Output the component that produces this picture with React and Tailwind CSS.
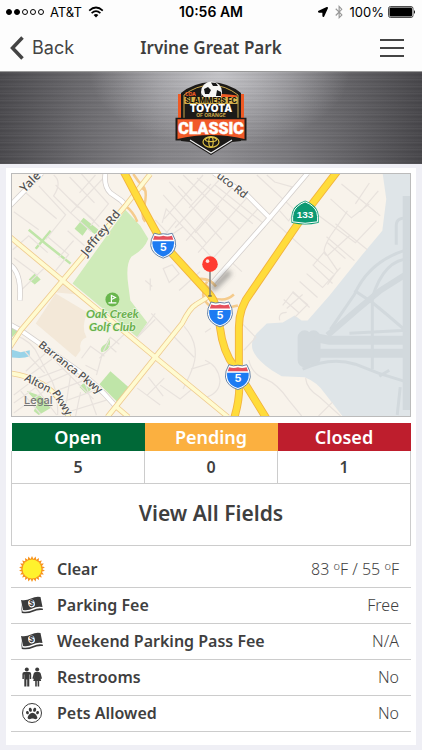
import React from "react";
import { FaBluetoothB, FaLocationArrow, FaPaw } from "react-icons/fa";

const iosFont = "font-[Inter,'Liberation_Sans',sans-serif]";

const dots = [true, true, false, false, false];

const statuses = [
  { label: "Open", count: 5, color: "bg-[#006837]" },
  { label: "Pending", count: 0, color: "bg-[#fbb040]" },
  { label: "Closed", count: 1, color: "bg-[#be1e2d]" },
];

function Battery() {
  return (
    <svg className="h-3 w-7" viewBox="0 0 28 12" aria-label="Battery full">
      <rect x="0.5" y="0.5" width="24.5" height="11" rx="2" fill="none" stroke="#222" strokeWidth="0.8" />
      <rect x="1.5" y="1.5" width="22.5" height="9" rx="1" fill="#000" />
      <path d="M26 4 Q28 6 26 8Z" fill="#000" />
    </svg>
  );
}

function Wifi() {
  return (
    <svg className="h-3 w-4" viewBox="0 0 16 12" fill="none" stroke="#000" strokeWidth="1.7" aria-hidden="true">
      <path d="M1.2 4.6 Q8 -1.6 14.8 4.6" />
      <path d="M3.6 7.2 Q8 3.2 12.4 7.2" />
      <path d="M5.6 9 Q8 7 10.4 9 L8 11.6Z" fill="#000" stroke="none" />
    </svg>
  );
}

function Crest() {
  return (
    <svg className="h-[78px] w-[78px]" viewBox="172 80 78 78" role="img" aria-label="Slammers FC Toyota of Orange Classic">
      <path d="M178 95 H244 V122 H178Z" fill="#ef5a24" />
      <path d="M211 83 Q229 84 241 94 V142 L232 143 L211 156 L190 143 L181 142 V94 Q193 84 211 83Z" fill="#1c1a18" />
      <path d="M184 120 V96 Q196 86.500 211 86 Q226 86.500 238 96 V120" fill="none" stroke="#c9a64a" strokeWidth="1" />
      <path d="M184.500 98 H237.500 V104.800 H184.500Z" fill="#d9b44e" />
      <path d="M202 97 Q212 93 237 96.500 V98 H202Z" fill="#ef5a24" />
      <circle cx="211.500" cy="93" r="10.500" fill="#f6f6f4" />
      <path d="M184.500 98.300 H237.500 V104.800 H184.500Z" fill="#d9b44e" />
      <path d="M204 90 L208 88 L211 91 L209 95 L205 95Z M211 83.500 L216 84 L218 87 L213 87Z M217 91 L221 93 L221 97 L216 97Z M201.500 95 L204 98 H202Z" fill="#161616" />
      <text x="185" y="97" fontSize="5" fontWeight="800" fill="#ef5a24" fontFamily="Inter, sans-serif">CDA</text>
      <text x="211" y="104.200" fontSize="7" fontWeight="800" fill="#17130d" textAnchor="middle" fontFamily="Inter, sans-serif">SLAMMERS FC</text>
      <text x="211" y="113.300" fontSize="10" fontWeight="900" fill="#fff" textAnchor="middle" fontFamily="Inter, sans-serif">TOYOTA</text>
      <text x="211" y="118" fontSize="5" fontWeight="700" fill="#c9a64a" textAnchor="middle" fontFamily="Inter, sans-serif">OF ORANGE</text>
      <path d="M175.500 118.800 H246.500 V141.500 H241 Q211 133 181 141.500 H175.500Z" fill="#1c1a18" />
      <path d="M177.500 120.200 H244.500 V140 Q211 132 177.500 140Z" fill="#f15a29" />
      <text x="211" y="135" fontSize="16" fontWeight="900" fill="#fff" stroke="#fff" strokeWidth="0.400" textAnchor="middle" fontFamily="Roboto, sans-serif">CLASSIC</text>
      <path d="M190 141 L211 154 L232 141" fill="none" stroke="#eee" strokeWidth="1.200" />
      <g fill="none" stroke="#dfc244" strokeWidth="1.200">
        <ellipse cx="211" cy="143" rx="8" ry="5.300" />
        <ellipse cx="211" cy="140.500" rx="5.500" ry="2.200" />
        <ellipse cx="211" cy="143" rx="2.200" ry="5" />
      </g>
    </svg>
  );
}

function Shield({ x, y }) {
  return (
    <g transform={`translate(${x} ${y})`}>
      <path d="M-9 -12.500 Q-4.500 -10.500 0 -12 Q4.500 -10.500 9 -12.500 Q13 -6 12.500 0 Q11 9 0 12.500 Q-11 9 -12.500 0 Q-13 -6 -9 -12.500Z" fill="#fff" stroke="#57779f" strokeWidth="0.900" />
      <path d="M-8.800 -10 Q-4 -8.500 0 -10 Q4 -8.500 8.800 -10 L10.200 -6 H-10.200Z" fill="#e5505c" />
      <path d="M-10.800 -4.500 H10.800 Q12 7 0 11 Q-12 7 -10.800 -4.500Z" fill="#1d7bf2" />
      <text y="5" textAnchor="middle" fontSize="11" fontWeight="700" fill="#fff" fontFamily="Inter, sans-serif">5</text>
    </g>
  );
}

const arterials = [
  "M150 173 L125 205 L62 280 L20 330 L9 347",
  "M9 236 L62 280 L155 357 L228 417",
  "M107 417 L155 357 L182 323 Q190 307 196 304 L212 294",
  "M9 373 Q24 375 36 381 Q58 391 68 417",
  "M115 406 L128 417",
];
const interstates = [
  "M123 170 L140 202 Q155 230 162 242 L206 290 Q218 300 220 327 Q223 352 235 367 L267 419",
  "M338 170 L305 213 L251 292 Q239 307 239 327 V377 Q241 397 234 419",
];
const whiteRoads = [
  "M9 205 L41 172",
  "M105 172 Q103 185 110 192 L120 199 Q124 202 125 206",
  "M308 172 L270 217 L212 283",
  "M214 172 L248 195 L270 217",
  "M9 324 L20 330 L67 363 Q93 380 115 406",
  "M9 264 Q21 272 19 300",
];
const ramps = [
  "M125 205 Q133 211 137 221 M133 173 Q138 181 144 187 Q147 192 144 205 Q140 215 145 221 M133 190 Q141 184 145 190",
  "M191 275 Q205 283 210 289 M195 279 Q209 276 216 286 M211 296 Q224 303 234 294 M212 304 Q225 309 238 305",
  "M207 281 Q196 300 216 309",
];
const lanes = [
  "M53 174 Q62 181 53 195 L70 212 L103 177 M70 212 L91 231 M78 206 L99 226 M68 197 L94 220 M38 185 L65 214 L45 239 M24 191 L56 218 M13 211 L38 229 M55 184 L78 207 M69 176 L94 202 M81 173 L108 203 L90 225 M95 174 L79 192",
  "M12 249 L28 235 L47 252 M47 236 L68 254 L55 270 M67 230 L84 245 M73 240 L58 257 M32 257 L43 266 M13 257 L37 275 M20 290 L43 268",
  "M162 222 L166 208 L213 258 M163 194 L206 242 M169 181 L222 239 M183 174 L239 228 M197 177 L253 223 M215 184 L263 222 M164 218 L203 174 M175 227 L220 178 M186 240 L233 186 M198 252 L247 197 M209 262 L258 208 M155 219 L170 235 L183 226 M164 235 L176 220",
  "M163 268 L172 264 L179 273 L169 282Z M145 280 L152 286 M150 278 V290 M189 207 L211 183 M195 232 L219 205 M178 185 L192 200",
  "M257 174 L295 209 M267 174 L275 181 L296 187 M270 217 L310 253 L334 273 M280 210 L289 220 L298 207 M292 186 L280 205 M265 226 L252 238",
  "M331 198 L352 217 L370 203 M318 214 L356 242 L377 220 M342 183 L381 215 M348 210 L340 222 L331 235 Q320 253 328 255 L350 235 M336 223 L368 249 M327 236 L355 260 M314 264 L325 251 L338 270 L328 284 M307 273 L323 287 L341 267 M313 264 L333 283 M300 281 L318 297 M293 291 L310 307 M328 242 L346 258 M370 182 L356 203 M379 190 L361 211",
  "M283 305 L293 292 L308 304 L295 317 M287 308 L303 294 M284 299 L299 312 M280 320 Q278 312 287 312 M240 321 L256 337 L244 350",
  "M249 360 Q252 374 266 379 Q278 384 289 400 L302 416 M306 378 Q307 389 320 397 L341 416 M333 402 L319 416",
  "M151 313 L194 357 M155 313 L137 337 M99 358 L130 328 M184 326 Q203 347 190 374 L183 389 M191 369 L210 363 M148 377 L163 396 M137 388 L160 405 M160 385 L180 399 L192 389 M147 395 L164 378 M205 332 L211 328 M205 360 Q218 365 220 380 Q220 392 207 397",
  "M81 358 L90 346 L104 356 M96 375 L102 353 M85 365 L97 371 M103 351 L110 337 L119 344 M108 345 L116 352",
  "M13 395 L30 382 M13 403 L37 386 M13 413 L45 390 M25 371 L48 350 M30 374 L58 354 M37 378 L66 367 M46 383 L78 369 M52 392 L87 379 M56 404 L98 389 M64 413 L106 400 M24 351 L44 373 M42 350 L77 377 M56 362 L93 399 M20 391 L40 414 M31 382 L56 415 M70 375 L64 414 M82 376 L96 415 M80 392 L75 416 M15 335 Q32 341 38 356 L47 373 Q58 389 57 415",
  "M179 290 L200 271 M137 337 L155 319 M230 260 L242 271",
];

const routeSign = "M305.500 201 Q310 202.500 313 205.500 Q319 210 318 221 Q305.500 224 293 221 Q292 210 298 205.500 Q301 202.500 305.500 201Z";

function FieldMap() {
  return (
    <svg className="block h-[242px] w-full" viewBox="11 173 400 243" preserveAspectRatio="xMidYMid slice" role="img" aria-label="Map of Irvine Great Park">
      <defs>
        <filter id="soft" x="-50%" y="-50%" width="200%" height="200%"><feGaussianBlur stdDeviation="2.500" /></filter>
      </defs>
      <rect x="-400" y="0" width="1400" height="800" fill="#f8f3eb" />
      <path d="M55 293 L87 312 Q80 327 86 337 Q78 340 80 350 L75 357 L35 323Z" fill="#f3e8d8" />
      <path d="M62 283 L77 294 L56 292Z" fill="#f3e8d8" />
      <path d="M125 209 L140 225 L148 238 Q144 249 131 256 Q125 264 128 285 L130 300 L147 322 L137 337 L72 283Z" fill="#cfebb9" />
      <g fill="#bfe5a8">
        <path d="M83 217 L98 229 L95 234 L87 228 L82 235 L74 228Z" />
        <path d="M110 371 L128 387 L117 402 L99 384Z" />
        <path d="M34 273 L40 279 L34 284 L28 279Z M84 382 L91 389 L86 394 L79 387Z M26 391 L40 396 L50 408 L38 415 L33 411 L37 403Z M11 326 L17 331 L11 337Z" />
        <path d="M109 337 Q112 350 101 352 Q98 348 106 343Z" />
      </g>
      <path d="M28 229 L45 243 L70 263 M50 230 L35 248" fill="none" stroke="#bfe5a8" strokeWidth="2.500" />
      <path d="M9 349 L20 352 L29 350 L29 356 Q22 359 9 357Z" fill="#98d3e8" />
      <path d="M383 170 L387 198 L383 230 L362 255 L330 295 L308 320 L302 320 L295 315 L283 322 L267 323 L257 333 Q250 341 253 350 Q257 360 272 370 L282 376 L305 377 Q318 382 325 393 L346 420 H800 V170Z" fill="#dfe5e8" />
      <g fill="none" stroke="#d2d9dd" strokeLinejoin="round">
        <path d="M408 195 V410" strokeWidth="9" />
        <path d="M305 337 V360 M314 337 V358" strokeWidth="14" strokeLinecap="round" />
        <path d="M315 337 L330 340 H411 M315 353 H411" strokeWidth="9" />
        <path d="M328 335 L358 309 L381 290 L408 273" strokeWidth="6" />
        <path d="M331 329 L355 294 Q370 260 408 249 M355 290 L373 302 Q389 315 405 329 M373 297 V369 M350 333 L408 330" strokeWidth="3" />
        <path d="M303 369 Q331 356 356 364 L379 373 L408 382 M380 376 L390 370 M398 415 L401 387 M411 218 Q397 215 397 225 V244 M411 258 Q385 258 373 297" strokeWidth="3" />
      </g>
      <g fill="none" stroke="#e8e2dd" strokeWidth="1.200">
        {lanes.map((d) => <path key={d} d={d} />)}
      </g>
      <g fill="none">
        {whiteRoads.map((d) => <path key={d} d={d} stroke="#d3cecb" strokeWidth="5.500" />)}
        {whiteRoads.map((d) => <path key={d} d={d} stroke="#fff" strokeWidth="4" />)}
        {ramps.map((d) => <path key={d} d={d} stroke="#f5cb8c" strokeWidth="2.500" />)}
        {arterials.map((d) => <path key={d} d={d} stroke="#efcb90" strokeWidth="5.500" />)}
        {arterials.map((d) => <path key={d} d={d} stroke="#fffbd0" strokeWidth="3.800" />)}
        {interstates.map((d) => <path key={d} d={d} stroke="#f2b33e" strokeWidth="8" />)}
        {interstates.map((d) => <path key={d} d={d} stroke="#ffdc3b" strokeWidth="6.200" />)}
      </g>
      <g fontFamily="'Noto Sans', 'Open Sans', sans-serif" fontSize="11" fontWeight="500" fill="#505050" stroke="#fbf8f2" strokeWidth="2" paintOrder="stroke">
        <text fontSize="12" transform="translate(24 192) rotate(-45)">Yale</text>
        <text fontSize="12" transform="translate(86 256) rotate(-51)">Jeffrey Rd</text>
        <text transform="translate(216 176) rotate(38)">uco Rd</text>
        <text transform="translate(37 346) rotate(38)">Barranca Pkwy</text>
        <text transform="translate(23 380) rotate(27)">Alton</text>
        <text transform="translate(51 393) rotate(57)">Pkwy</text>
      </g>
      <g fontFamily="Lato, sans-serif" fontSize="12" fontStyle="italic" fontWeight="700" fill="#68b04c" stroke="#eaf5df" strokeWidth="1.500" paintOrder="stroke" textAnchor="middle">
        <text x="112" y="318">Oak Creek</text>
        <text x="112" y="331">Golf Club</text>
      </g>
      <circle cx="112" cy="299" r="7" fill="#68b64c" />
      <path d="M111 302 V295 L115 297 L111 299 M108 302.500 H116" fill="none" stroke="#fff" strokeWidth="1.200" />
      <Shield x={163} y={245} />
      <Shield x={220} y={314} />
      <Shield x={238} y={377} />
      <path d={routeSign} fill="#0c9a73" stroke="#0c9a73" strokeWidth="2.500" />
      <path d={routeSign} fill="#0c9a73" stroke="#fff" strokeWidth="1" />
      <text x="305.500" y="217" textAnchor="middle" fontSize="10" fontWeight="700" fill="#fff" fontFamily="'Liberation Sans', sans-serif">133</text>
      <path d="M212 289 L230 271" stroke="#555" strokeOpacity="0.500" strokeWidth="6" filter="url(#soft)" />
      <path d="M210 270 V296" stroke="#7f7f7f" strokeWidth="1.500" />
      <path d="M208 295.500 H212" stroke="#555" />
      <circle cx="210" cy="263.500" r="7.800" fill="#ff3b30" />
      <circle cx="207.500" cy="260.500" r="1.800" fill="#fff" fillOpacity="0.850" />
    </svg>
  );
}

function SunIcon() {
  const rays = Array.from({ length: 44 }, (_, i) => {
    const r = i % 2 ? 10.2 : 13;
    const a = (i * Math.PI) / 22;
    return `${14 + r * Math.sin(a)},${14 - r * Math.cos(a)}`;
  }).join(" ");
  return (
    <svg className="size-7" viewBox="0 0 28 28" aria-hidden="true">
      <polygon points={rays} fill="#f7941e" />
      <circle cx="14" cy="14" r="9.500" fill="#fff22d" />
    </svg>
  );
}

function MoneyIcon() {
  return (
    <svg className="h-5 w-6" viewBox="0 0 24 20" aria-hidden="true">
      <path d="M1 5 Q6 6 11 3.500 Q16 1 20.500 2 L22.500 12 Q17 11 12.500 13.500 Q8 16 3 15Z" fill="#3b3b3b" />
      <path d="M1 9 L2.500 16.500 Q8 17.500 13 15 Q18 12.500 22.700 13.500 L23 15 Q17 14.500 13 16.800 Q8 19 1.800 18Z" fill="#3b3b3b" />
      <ellipse cx="11.500" cy="8.500" rx="3.300" ry="4" fill="#fff" transform="rotate(-15 11.500 8.500)" />
      <text x="11.500" y="11.200" fontSize="7.500" fontWeight="700" textAnchor="middle" fill="#3b3b3b" fontFamily="Inter, sans-serif">$</text>
    </svg>
  );
}

function RestroomIcon() {
  return (
    <svg className="h-5 w-5" viewBox="0 0 20 20" fill="#3b3b3b" aria-hidden="true">
      <circle cx="4.800" cy="2.400" r="2" />
      <path d="M2.300 5 H7.300 Q9.200 5 9.200 7 V12 H7.700 V7.500 H7.300 V19.500 H5.200 V12.500 H4.400 V19.500 H2.300 V7.500 H1.900 V12 H0.400 V7 Q0.400 5 2.300 5Z" />
      <circle cx="15.200" cy="2.400" r="2" />
      <path d="M13.500 5 H16.900 Q18.300 5 18.700 6.500 L20 11.500 L18.700 12 L17.300 7.500 L19.200 14 H17.200 V19.500 H15.600 V14 H14.800 V19.500 H13.200 V14 H11.200 L13.100 7.500 L11.700 12 L10.400 11.500 L11.700 6.500 Q12.100 5 13.500 5Z" />
    </svg>
  );
}

function PetIcon() {
  return (
    <span className="flex size-5 items-center justify-center rounded-full border border-[#3b3b3b] text-[#3b3b3b]">
      <FaPaw size={13} aria-hidden="true" />
    </span>
  );
}

function Degrees({ value }) {
  return (
    <>
      {value} <sup className="text-[11px]">o</sup>F
    </>
  );
}

const details = [
  { label: "Clear", icon: <SunIcon />, value: <><Degrees value={83} /> / <Degrees value={55} /></>, height: "h-[42px] pt-1.5" },
  { label: "Parking Fee", icon: <MoneyIcon />, value: "Free", height: "h-9" },
  { label: "Weekend Parking Pass Fee", icon: <MoneyIcon />, value: "N/A", height: "h-9" },
  { label: "Restrooms", icon: <RestroomIcon />, value: "No", height: "h-9" },
  { label: "Pets Allowed", icon: <PetIcon />, value: "No", height: "h-9" },
];

export default function App() {
  return (
    <div className="min-h-screen bg-[#efeff5] font-['Noto_Sans','Open_Sans',sans-serif] text-[#3f3f3f]">
      <header className="bg-[#fdfdfd]">
        <div className={`grid h-6 grid-cols-3 items-center px-1.5 text-[13px] leading-4 text-black ${iosFont}`}>
          <div className="flex items-center gap-1.5">
            <span className="flex gap-0.5">
              {dots.map((full, i) => (
                <span key={i} className={`size-1.5 rounded-full border border-black ${full ? "bg-black" : ""}`} />
              ))}
            </span>
            <span>AT&amp;T</span>
            <Wifi />
          </div>
          <span className="text-center text-sm leading-4 font-semibold">10:56 AM</span>
          <div className="flex items-center justify-end gap-1">
            <FaLocationArrow size={10} aria-hidden="true" />
            <FaBluetoothB size={14} className="text-[#999]" aria-hidden="true" />
            <span>100%</span>
            <Battery />
          </div>
        </div>
        <div className="grid h-12 grid-cols-[1fr_auto_1fr] items-center border-b border-[#999] px-2.5">
          <button type="button" className={`flex items-center gap-2 text-lg text-[#444] ${iosFont}`}>
            <svg className="h-6 w-3.5" viewBox="0 0 14 24" fill="none" stroke="#444" strokeWidth="3.500" aria-hidden="true">
              <path d="M12.500 1.500 L2.500 12 L12.500 22.500" />
            </svg>
            Back
          </button>
          <h1 className="text-[17px] font-semibold">Irvine Great Park</h1>
          <button type="button" aria-label="Menu" className="mr-2 flex w-6 flex-col gap-1.5 justify-self-end">
            <span className="h-0.5 bg-[#444]" />
            <span className="h-0.5 bg-[#444]" />
            <span className="h-0.5 bg-[#444]" />
          </button>
        </div>
      </header>

      <div className="flex h-[92px] items-center justify-center bg-[repeating-linear-gradient(180deg,#ffffff0a_0px,#ffffff0a_1px,#0000000d_2px,#00000005_4px,#ffffff08_5px,#0000000a_7px),radial-gradient(ellipse_130px_75px_at_52%_0%,#e2e2e6b0,#e2e2e600),linear-gradient(90deg,#4b4a4e_0%,#69686c_18%,#858488_38%,#8e8d91_52%,#7b7a7e_68%,#605f63_85%,#48474b_100%)]">
        <Crest />
      </div>

      <main className="mx-1.5 mt-1 bg-white p-[5px] pb-[13px]">
        <section className="relative border border-[#bbb]">
          <FieldMap />
          <a href="#legal" className={`absolute bottom-2 left-3 text-[11px] font-medium text-[#777] underline ${iosFont}`}>Legal</a>
        </section>

        <table className="mt-1.5 w-full table-fixed border-collapse text-center">
          <thead>
            <tr className="h-7">
              {statuses.map((s) => (
                <th key={s.label} scope="col" className={`p-0 text-lg font-semibold text-white ${s.color}`}>{s.label}</th>
              ))}
            </tr>
          </thead>
          <tbody>
            <tr className="h-8">
              {statuses.map((s) => (
                <td key={s.label} className="border border-t-0 border-[#ccc] p-0 text-base font-semibold">{s.count}</td>
              ))}
            </tr>
          </tbody>
        </table>
        <button type="button" className="h-[62px] w-full border border-t-0 border-[#ccc] text-[21px] font-semibold">View All Fields</button>

        <dl>
          {details.map((d) => (
            <div key={d.label} className={`flex items-center border-b border-[#ccc] pr-3 ${d.height}`}>
              <dt className="flex flex-1 items-center gap-2 text-base font-semibold">
                <span className="flex w-[38px] justify-center pl-1">{d.icon}</span>
                {d.label}
              </dt>
              <dd className="text-base font-light">{d.value}</dd>
            </div>
          ))}
        </dl>
      </main>
    </div>
  );
}
